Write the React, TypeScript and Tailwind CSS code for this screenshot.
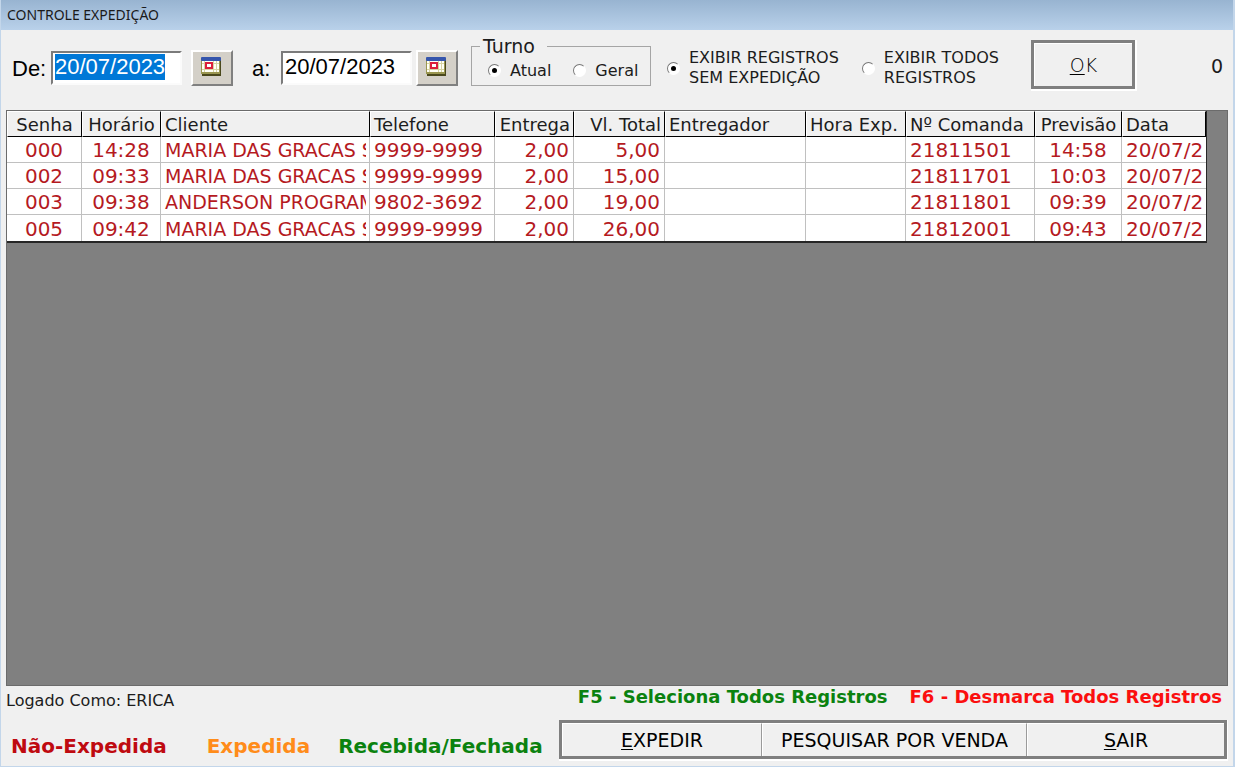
import { useEffect, useRef, type Ref, type ReactNode } from "react";

type Align = "left" | "center" | "right";

interface Column {
  title: string;
  width: string;
  align: Align;
  text?: string;
}

const columns: Column[] = [
  { title: "Senha", width: "w-[75px]", align: "center" },
  { title: "Horário", width: "w-[79px]", align: "center" },
  { title: "Cliente", width: "w-[209px]", align: "left", text: "text-[19px]" },
  { title: "Telefone", width: "w-[125px]", align: "left" },
  { title: "Entrega", width: "w-[79px]", align: "right" },
  { title: "Vl. Total", width: "w-[91px]", align: "right" },
  { title: "Entregador", width: "w-[141px]", align: "left" },
  { title: "Hora Exp.", width: "w-[100px]", align: "left" },
  { title: "Nº Comanda", width: "w-[129px]", align: "left" },
  { title: "Previsão", width: "w-[87px]", align: "center" },
  { title: "Data", width: "w-[84px]", align: "left" },
];

const rows: string[][] = [
  ["000", "14:28", "MARIA DAS GRACAS S", "9999-9999", "2,00", "5,00", "", "", "21811501", "14:58", "20/07/2"],
  ["002", "09:33", "MARIA DAS GRACAS S", "9999-9999", "2,00", "15,00", "", "", "21811701", "10:03", "20/07/2"],
  ["003", "09:38", "ANDERSON PROGRAM", "9802-3692", "2,00", "19,00", "", "", "21811801", "09:39", "20/07/2"],
  ["005", "09:42", "MARIA DAS GRACAS S", "9999-9999", "2,00", "26,00", "", "", "21812001", "09:43", "20/07/2"],
];

const alignClass: Record<Align, string> = {
  left: "text-left",
  center: "text-center",
  right: "text-right",
};

function CalendarIcon() {
  return (
    <svg width="20" height="19" viewBox="0 0 20 19" aria-hidden="true">
      <rect x="1" y="2" width="19" height="17" fill="#4a481c" />
      <rect x="0" y="3" width="19" height="14" fill="#9a9650" />
      <rect x="1" y="3" width="17" height="12" fill="#fffff6" />
      <path d="M1 6.5H18M1 12.5H18M3.5 4V15M12.5 4V15M15.5 4V15" stroke="#d8d4a4" strokeWidth="1" />
      <rect x="0" y="0" width="20" height="4" rx="1" fill="#3656ac" />
      <rect x="5" y="6" width="6" height="5" fill="#fff" stroke="#dc1f3c" strokeWidth="2" />
    </svg>
  );
}

function DateField({ id, label, inputRef }: { id: string; label: string; inputRef?: Ref<HTMLInputElement> }) {
  return (
    <input
      id={id}
      ref={inputRef}
      aria-label={label}
      type="text"
      defaultValue="20/07/2023"
      className="h-[34px] w-[131px] border-2 border-t-[#7b7b7b] border-l-[#7b7b7b] border-r-[#fbfbfb] border-b-[#fbfbfb] bg-white pb-[2px] pl-[2px] font-['Liberation_Sans',sans-serif] text-[22px] text-black outline-none selection:bg-[#0078d7] selection:text-white"
    />
  );
}

function CalendarButton({ label }: { label: string }) {
  return (
    <button
      type="button"
      aria-label={label}
      className="flex h-9 w-[42px] items-center justify-center border-2 border-t-white border-l-white border-r-[#808080] border-b-[#808080] bg-[#d4d0c8] pr-[3px] pb-[3px]"
    >
      <CalendarIcon />
    </button>
  );
}

function RadioOption({ name, checked, children }: { name: string; checked?: boolean; children: ReactNode }) {
  return (
    <label className="flex items-center gap-[9px] text-[16px] leading-5 whitespace-nowrap">
      <input
        type="radio"
        name={name}
        defaultChecked={checked}
        className="flex size-[13px] shrink-0 appearance-none items-center justify-center rounded-full border border-t-[#777] border-l-[#777] border-r-white border-b-white bg-white before:size-[5px] before:rounded-full before:content-[''] checked:before:bg-black"
      />
      <span>{children}</span>
    </label>
  );
}

export default function App() {
  const fromRef = useRef<HTMLInputElement>(null);

  useEffect(() => {
    fromRef.current?.focus();
    fromRef.current?.select();
  }, []);

  return (
    <div className="flex h-screen flex-col overflow-hidden border-r-2 border-b border-l border-[#c3d6ea] bg-[#f0f0f0] font-['DejaVu_Sans',sans-serif] text-[#1c1c1c]">
      <header className="flex h-[30px] shrink-0 items-center bg-linear-to-b from-[#98b4d1] to-[#b9d1ea] pl-[6px]">
        <h1 className="font-['Noto_Sans',sans-serif] text-[14px] leading-5 text-[#1a1a1a]">CONTROLE EXPEDIÇÃO</h1>
      </header>

      <form className="flex h-20 shrink-0 items-center pr-[10px] pb-1 pl-[11px]" onSubmit={(e) => e.preventDefault()}>
        <label htmlFor="de" className="w-[39px] shrink-0 font-['Liberation_Sans',sans-serif] text-[22px] text-black">
          De:
        </label>
        <DateField id="de" label="Data inicial" inputRef={fromRef} />
        <div className="ml-[9px]">
          <CalendarButton label="Escolher data inicial" />
        </div>
        <label htmlFor="ate" className="ml-[19px] w-[29px] shrink-0 font-['Liberation_Sans',sans-serif] text-[22px] text-black">
          a:
        </label>
        <DateField id="ate" label="Data final" />
        <div className="ml-1">
          <CalendarButton label="Escolher data final" />
        </div>

        <fieldset className="mt-[6px] ml-[13px] flex h-[50px] w-[180px] shrink-0 self-start border border-[#a5a5a5] pl-4">
          <legend className="-ml-2 pr-3 pl-[3px] text-[19px] leading-5">Turno</legend>
          <div className="flex gap-[22px]">
            <RadioOption name="turno" checked>
              Atual
            </RadioOption>
            <RadioOption name="turno">Geral</RadioOption>
          </div>
        </fieldset>

        <div className="ml-4 flex gap-[23px]">
          <RadioOption name="filtro" checked>
            EXIBIR REGISTROS
            <br />
            SEM EXPEDIÇÃO
          </RadioOption>
          <RadioOption name="filtro">
            EXIBIR TODOS
            <br />
            REGISTROS
          </RadioOption>
        </div>

        <div className="mt-[10px] ml-8 self-start border-r-2 border-b-2 border-white">
          <button
            type="submit"
            className="h-[49px] w-[104px] border-[3px] border-[#7f7f7f] text-[19px] font-extralight text-black"
          >
            <span className="flex size-full items-center justify-center border-t border-l border-white bg-[#f0f0f0]">
              <u className="underline-offset-2">O</u>K
            </span>
          </button>
        </div>
        <output className="ml-auto pb-1 text-[19px]">0</output>
      </form>

      <main className="mx-[5px] min-h-0 flex-1 overflow-hidden border border-[#6b6b6b] bg-[#808080]">
        <table className="w-[1199px] table-fixed border-separate border-spacing-0 border-r border-b-2 border-[#262626] bg-white">
          <thead>
            <tr>
              {columns.map((c) => (
                <th
                  key={c.title}
                  scope="col"
                  className={`h-[26px] overflow-hidden border border-t-white border-r-black border-b-black border-l-white bg-[#f0f0f0] px-[3px] pt-[2px] text-[18px] leading-[22px] font-normal whitespace-nowrap ${c.width} ${alignClass[c.align]}`}
                >
                  {c.title}
                </th>
              ))}
            </tr>
          </thead>
          <tbody className="text-[#b51a1f]">
            {rows.map((row) => (
              <tr key={row[0]} className="group">
                {row.map((value, i) => (
                  <td
                    key={columns[i].title}
                    className={`h-[26px] overflow-hidden border-r border-b border-[#c0c0c0] px-[3px] pt-[2px] leading-[23px] whitespace-nowrap group-last:border-b-0 last:border-r-0 ${columns[i].text ?? "text-[20px]"} ${alignClass[columns[i].align]}`}
                  >
                    <div className="overflow-hidden px-px">{value}</div>
                  </td>
                ))}
              </tr>
            ))}
          </tbody>
        </table>
      </main>

      <footer className="flex h-20 shrink-0 justify-between px-[5px]">
        <div className="flex flex-col justify-between pt-[5px] pb-2">
          <p className="text-[16px] leading-5">Logado Como: ERICA</p>
          <ul className="flex gap-10 pl-[5px] text-[20px] leading-6 font-bold">
            <li className="text-[#bf0a10]">Não-Expedida</li>
            <li className="text-[#ff8c1a]">Expedida</li>
            <li className="-ml-3 text-[#0b820f]">Recebida/Fechada</li>
          </ul>
        </div>
        <div className="flex w-[669px] flex-col justify-between pb-[5px]">
          <p className="flex justify-end gap-[22px] pr-[6px] text-[18px] leading-[22px] font-bold whitespace-nowrap">
            <span className="text-[#0b820f]">F5 - Seleciona Todos Registros</span>
            <span className="text-[#fb0f0f]">F6 - Desmarca Todos Registros</span>
          </p>
          <div className="border-r border-b-2 border-white">
            <div className="flex h-[39px] border-[3px] border-[#7f7f7f] text-[19px] text-black">
              <button type="button" className="w-[200px] border-t border-r border-l border-t-white border-r-[#9a9a9a] border-l-white">
                <u className="underline-offset-2">E</u>XPEDIR
              </button>
              <button type="button" className="w-[265px] border-t border-r border-l border-t-white border-r-[#9a9a9a] border-l-white">
                PESQUISAR POR VENDA
              </button>
              <button type="button" className="flex-1 border-t border-l border-white">
                <u className="underline-offset-2">S</u>AIR
              </button>
            </div>
          </div>
        </div>
      </footer>
    </div>
  );
}
